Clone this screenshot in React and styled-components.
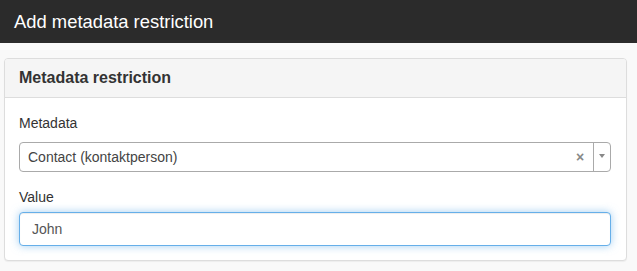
import React from "react";
import styled, { createGlobalStyle } from "styled-components";

const GlobalStyle = createGlobalStyle`
  html, body {
    margin: 0;
    padding: 0;
    background: #f9f9f9;
    font-family: "Liberation Sans", Arial, sans-serif;
    color: #333;
  }
  * {
    box-sizing: border-box;
  }
`;

const App = () => {
  return (
    <>
      <GlobalStyle />
      <Page>
        <Header>
          <HeaderTitle>Add metadata restriction</HeaderTitle>
        </Header>
        <Content>
          <Panel>
            <PanelHeading>Metadata restriction</PanelHeading>
            <PanelBody>
              <FormGroup>
                <Label first>Metadata</Label>
                <Select>
                  <SelectText>Contact (kontaktperson)</SelectText>
                  <Clear>×</Clear>
                  <ArrowBox>
                    <Arrow />
                  </ArrowBox>
                </Select>
              </FormGroup>
              <FormGroup last>
                <Label>Value</Label>
                <Input defaultValue="John" />
              </FormGroup>
            </PanelBody>
          </Panel>
        </Content>
      </Page>
    </>
  );
};

export default App;

const Page = styled.div`
  width: 637px;
  min-height: 271px;
  background: #f9f9f9;
`;

const Header = styled.div`
  height: 43px;
  background: #2b2b2b;
  display: flex;
  align-items: center;
  padding-left: 14px;
`;

const HeaderTitle = styled.div`
  color: #fff;
  font-size: 18.4px;
  line-height: 20px;
  padding-top: 1px;
`;

const Content = styled.div`
  padding: 15px 10px 10px 4px;
`;

const Panel = styled.div`
  background: #fff;
  border: 1px solid #ddd;
  border-radius: 4px;
  box-shadow: 0 1px 1px rgba(0, 0, 0, 0.05);
`;

const PanelHeading = styled.div`
  height: 39px;
  background: #f5f5f5;
  border-bottom: 1px solid #ddd;
  border-radius: 3px 3px 0 0;
  padding: 0 14px;
  display: flex;
  align-items: center;
  font-size: 16px;
  font-weight: 700;
  color: #333;
`;

const PanelBody = styled.div`
  padding: 15px 15px 14px 14px;
`;

const FormGroup = styled.div`
  margin-bottom: ${({ last }) => (last ? "0" : "15px")};
`;

const Label = styled.div`
  font-size: 14px;
  line-height: 20px;
  color: #333;
  margin-bottom: ${({ first }) => (first ? "9px" : "5px")};
`;

const Select = styled.div`
  height: 30px;
  border: 1px solid #aaa;
  border-radius: 4px;
  background: #fff;
  display: flex;
  align-items: center;
`;

const SelectText = styled.div`
  flex: 1;
  padding-left: 8px;
  font-size: 14px;
  color: #444;
`;

const Clear = styled.div`
  font-size: 14px;
  font-weight: 700;
  color: #888;
  width: 18px;
  text-align: center;
  line-height: 28px;
  margin-right: 4px;
`;

const ArrowBox = styled.div`
  width: 17px;
  height: 100%;
  border-left: 1px solid #aaa;
  display: flex;
  align-items: flex-start;
  justify-content: center;
  padding-top: 11px;
`;

const Arrow = styled.div`
  width: 0;
  height: 0;
  border-left: 3px solid transparent;
  border-right: 3px solid transparent;
  border-top: 4px solid #888;
`;

const Input = styled.input`
  display: block;
  width: 100%;
  height: 34px;
  padding: 6px 12px;
  font-family: "Liberation Sans", Arial, sans-serif;
  font-size: 14px;
  color: #555;
  background: #fff;
  border: 1px solid #66afe9;
  border-radius: 4px;
  outline: 0;
  box-shadow: inset 0 1px 1px rgba(0, 0, 0, 0.075),
    0 0 8px rgba(102, 175, 233, 0.6);
`;
